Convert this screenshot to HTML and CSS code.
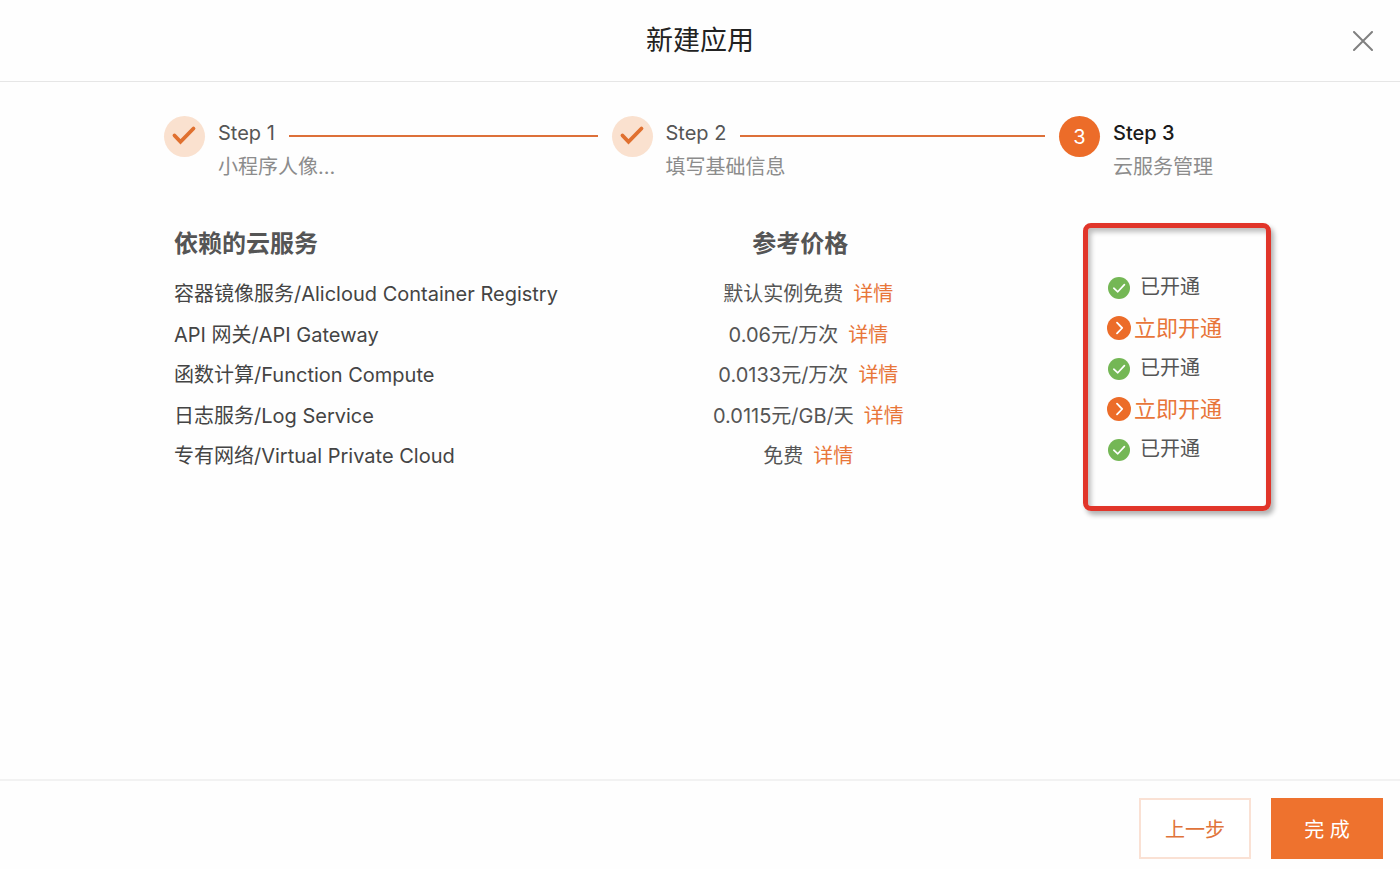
FILE: index.html
```html
<!DOCTYPE html>
<html lang="zh-CN">
<head>
<meta charset="utf-8">
<meta name="viewport" content="width=device-width, initial-scale=1">
<title>新建应用</title>
<link rel="stylesheet" href="styles.css">
</head>
<body>
<svg class="sprite" aria-hidden="true">
  <symbol id="tick" viewBox="0 0 41 41"><path d="M10.5 19.5l6 6.3L29.5 12.5" fill="none" stroke="#e0702f" stroke-width="3.8" stroke-linecap="round" stroke-linejoin="miter"/></symbol>
  <symbol id="opened" viewBox="0 0 22 22"><circle cx="11" cy="11" r="11" fill="#74b755"/><path d="M5.8 11.2l4 3.6 6.6-7.2" fill="none" stroke="#fff" stroke-width="1.7" stroke-linecap="round" stroke-linejoin="round"/></symbol>
  <symbol id="go" viewBox="0 0 24 24"><circle cx="12" cy="12" r="12" fill="#ec6c29"/><path d="M10 6.7l5.2 5.3-5.2 5.4" fill="none" stroke="#fff" stroke-width="1.8" stroke-linecap="round" stroke-linejoin="round"/></symbol>
</svg>
<header class="header">
  <h1 class="title">新建应用</h1>
  <button class="close" type="button" aria-label="关闭">
    <svg width="20" height="20" viewBox="0 0 20 20"><path d="M1 1l18 18M19 1L1 19" fill="none" stroke="#808080" stroke-width="2" stroke-linecap="round"/></svg>
  </button>
</header>
<main class="main">
  <ol class="steps">
    <li class="step">
      <span class="badge badge-done"><svg width="41" height="41"><use href="#tick"/></svg></span>
      <div class="step-text">
        <div class="step-title step-linked">Step 1</div>
        <div class="step-desc">小程序人像…</div>
      </div>
    </li>
    <li class="step">
      <span class="badge badge-done"><svg width="41" height="41"><use href="#tick"/></svg></span>
      <div class="step-text">
        <div class="step-title step-linked">Step 2</div>
        <div class="step-desc">填写基础信息</div>
      </div>
    </li>
    <li class="step" aria-current="step">
      <span class="badge badge-current">3</span>
      <div class="step-text">
        <div class="step-title step-active">Step 3</div>
        <div class="step-desc">云服务管理</div>
      </div>
    </li>
  </ol>
  <section class="services">
    <table class="table">
      <thead>
        <tr><th class="name" scope="col">依赖的云服务</th><th class="price" scope="col">参考价格</th></tr>
      </thead>
      <tbody>
        <tr><td class="name">容器镜像服务/Alicloud Container Registry</td><td class="price">默认实例免费<a class="detail" href="#">详情</a></td></tr>
        <tr><td class="name">API 网关/API Gateway</td><td class="price">0.06元/万次<a class="detail" href="#">详情</a></td></tr>
        <tr><td class="name">函数计算/Function Compute</td><td class="price">0.0133元/万次<a class="detail" href="#">详情</a></td></tr>
        <tr><td class="name">日志服务/Log Service</td><td class="price">0.0115元/GB/天<a class="detail" href="#">详情</a></td></tr>
        <tr><td class="name">专有网络/Virtual Private Cloud</td><td class="price">免费<a class="detail" href="#">详情</a></td></tr>
      </tbody>
    </table>
    <ul class="status">
      <li class="status-item"><span class="opened"><svg width="22" height="22"><use href="#opened"/></svg>已开通</span></li>
      <li class="status-item"><a class="open-now" href="#"><svg width="24" height="24"><use href="#go"/></svg>立即开通</a></li>
      <li class="status-item"><span class="opened"><svg width="22" height="22"><use href="#opened"/></svg>已开通</span></li>
      <li class="status-item"><a class="open-now" href="#"><svg width="24" height="24"><use href="#go"/></svg>立即开通</a></li>
      <li class="status-item"><span class="opened"><svg width="22" height="22"><use href="#opened"/></svg>已开通</span></li>
    </ul>
  </section>
</main>
<footer class="footer">
  <button class="btn btn-outline" type="button">上一步</button>
  <button class="btn btn-primary" type="button">完 成</button>
</footer>
</body>
</html>
```
FILE: styles.css
```css
* {
  box-sizing: border-box;
}

body {
  margin: 0;
  min-height: 100vh;
  display: flex;
  flex-direction: column;
  background: #fefefe;
  color: #444;
  font-family: Inter, "Noto Sans CJK SC", sans-serif;
  font-size: 20px;
}

svg {
  display: block;
  flex: none;
}

.sprite {
  position: absolute;
  width: 0;
  height: 0;
}

a {
  color: #e8763a;
  text-decoration: none;
}

button {
  font: inherit;
  cursor: pointer;
}

.header {
  display: grid;
  grid-template-columns: 1fr auto 1fr;
  align-items: center;
  padding: 0 27px;
  border-bottom: 1px solid #e6e6e6;
}

.title {
  grid-column: 2;
  margin: 0;
  color: #222;
  font-size: 27px;
  font-weight: 400;
  line-height: 81px;
}

.close {
  justify-self: end;
  padding: 0;
  border: 0;
  background: none;
}

.main {
  flex: 1;
  padding: 34px 129px 34px 164px;
}

.steps {
  display: grid;
  grid-template-columns: 1fr 1fr auto;
  gap: 14px;
  margin: 0;
  padding: 0 58px 0 0;
  list-style: none;
}

.step {
  display: flex;
  gap: 13px;
}

.badge {
  flex: none;
  display: flex;
  align-items: center;
  justify-content: center;
  width: 41px;
  height: 41px;
  border-radius: 50%;
}

.badge-done {
  background: #fae1cf;
}

.badge-current {
  background: #ec6c29;
  color: #fff;
}

.step-text {
  flex: 1;
  line-height: 34px;
  white-space: nowrap;
}

.step-title {
  display: flex;
  align-items: center;
  gap: 14px;
  color: #555;
}

.step-linked::after {
  content: "";
  flex: 1;
  height: 2px;
  margin-top: 6px;
  background: #dd7039;
}

.step-active {
  color: #1a1a1a;
  font-weight: 500;
}

.step-desc {
  color: #8c8c8c;
}

.services {
  display: flex;
  align-items: flex-start;
  gap: 40px;
  margin-top: 30px;
  padding-left: 10px;
}

.table {
  flex: 1;
  border-collapse: collapse;
  table-layout: fixed;
  line-height: 41px;
}

.table tbody tr:nth-child(even) {
  line-height: 40px;
}

.table th,
.table td {
  padding: 0;
  white-space: nowrap;
}

.table th {
  color: #555;
  font-size: 24px;
  font-weight: 700;
  line-height: 60px;
}

.table .name {
  width: 46%;
  text-align: left;
}

.table .price {
  text-align: center;
}

.table th.price {
  padding-right: 16px;
}

.table td.price {
  color: #555;
}

.detail {
  margin-left: 10px;
}

.status {
  flex: none;
  width: 188px;
  margin: 9px 0 0;
  padding: 39px 19px 36px;
  border: 5px solid #e1352a;
  border-radius: 8px;
  box-shadow: 3px 4px 5px rgba(0, 0, 0, 0.3), inset 3px 4px 5px rgba(0, 0, 0, 0.25);
  line-height: 41px;
  list-style: none;
}

.status-item {
  white-space: nowrap;
}

.status-item:nth-child(even) {
  line-height: 40px;
}

.opened,
.open-now {
  display: flex;
  align-items: center;
}

.opened {
  gap: 10px;
  padding-left: 1px;
  color: #555;
}

.open-now {
  gap: 3px;
  font-size: 22px;
}

.footer {
  display: flex;
  justify-content: flex-end;
  gap: 20px;
  padding: 17px 17px 10px;
  border-top: 2px solid #f2f2f2;
}

.btn {
  min-width: 112px;
  height: 61px;
  padding: 0 24px;
  border: 2px solid #fae1d4;
  background: #fff;
  color: #e0733a;
}

.btn-primary {
  border-color: #ee722e;
  background: #ee722e;
  color: #fff;
}
```
